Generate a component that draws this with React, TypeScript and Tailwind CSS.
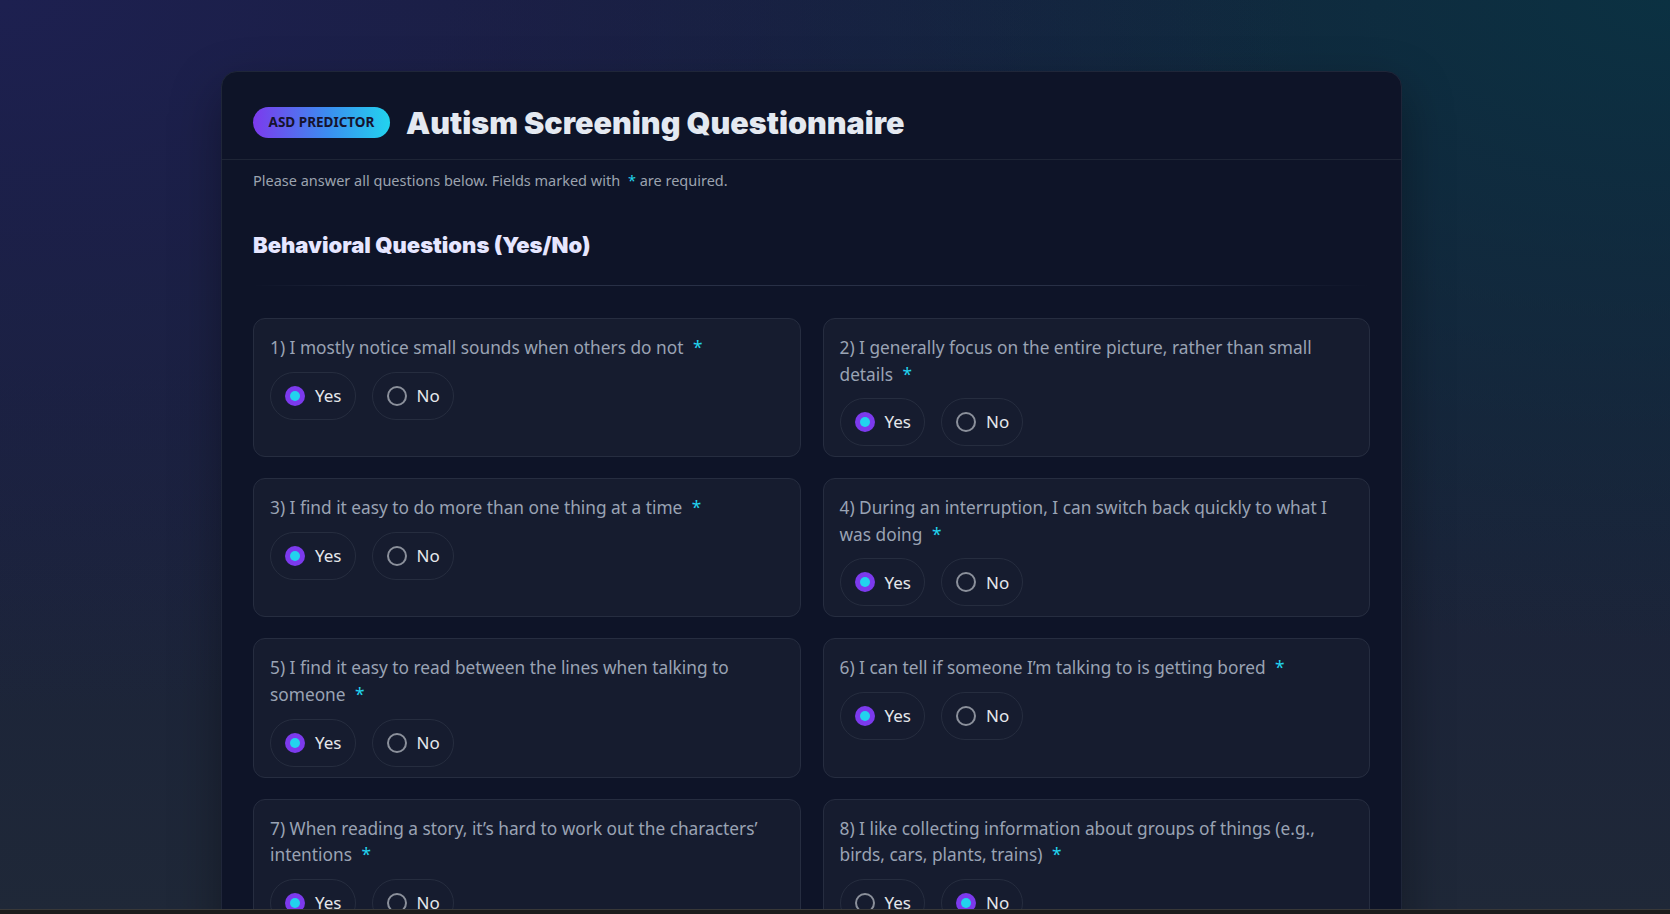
import React, { useState } from 'react';

const questions = [
  "I mostly notice small sounds when others do not",
  "I generally focus on the entire picture, rather than small details",
  "I find it easy to do more than one thing at a time",
  "During an interruption, I can switch back quickly to what I was doing",
  "I find it easy to read between the lines when talking to someone",
  "I can tell if someone I’m talking to is getting bored",
  "When reading a story, it’s hard to work out the characters’ intentions",
  "I like collecting information about groups of things (e.g., birds, cars, plants, trains)",
  "I find it easy to work out what someone is thinking or feeling just by looking at their face",
  "I find it difficult to work out people’s intentions",
];

const initial = ["Yes", "Yes", "Yes", "Yes", "Yes", "Yes", "Yes", "No", "Yes", "No"];

function Radio({ label, checked, onSelect }: { label: string; checked: boolean; onSelect: () => void }) {
  return (
    <button
      type="button"
      onClick={onSelect}
      className="inline-flex items-center h-[48px] pl-[14px] pr-[13px] gap-[10px] rounded-full border border-[#262d3f] text-[17px] text-[#e5e7eb]"
    >
      {checked ? (
        <span className="w-[20px] h-[20px] rounded-full bg-[#7c3aed] flex items-center justify-center">
          <span className="w-[10px] h-[10px] rounded-full bg-[#22d3ee]" />
        </span>
      ) : (
        <span className="w-[20px] h-[20px] rounded-full border-2 border-[#8b909b]" />
      )}
      {label}
    </button>
  );
}

export default function App() {
  const [answers, setAnswers] = useState<string[]>(initial);

  const pick = (i: number, v: string) =>
    setAnswers(prev => prev.map((a, j) => (j === i ? v : a)));

  return (
    <div
      className="h-screen overflow-hidden bg-[radial-gradient(ellipse_at_0%_0%,#1d2050_0%,transparent_55%),radial-gradient(ellipse_at_100%_0%,#0b3142_0%,transparent_50%),linear-gradient(180deg,#171d36_0%,#1b2339_60%,#1f2838_100%)] pl-[221px] pt-[71px] font-['Noto_Sans',sans-serif]"
    >
      <div className="w-[1181px] rounded-[16px] border border-[#1f2639] bg-[#0e1428] shadow-[0_20px_50px_rgba(0,0,0,0.35)] pb-[40px]">

        {/* Header */}
        <div className="flex items-center gap-[16px] px-[31px] pt-[35px] pb-[21px] border-b border-[#1e2536]">
          <span className="h-[31px] w-[137px] rounded-full bg-[linear-gradient(90deg,#7c3aed,#3b8ef0_55%,#22d3ee)] flex items-center justify-center text-[13.5px] font-bold text-[#16132e]">
            ASD PREDICTOR
          </span>
          <h1 className="font-['Inter',sans-serif] text-[30.5px] leading-[31px] font-black text-[#e4e9f1]">
            Autism Screening Questionnaire
          </h1>
        </div>

        <p className="px-[31px] pt-[10px] text-[14.5px] leading-[21px] text-[#9ca3af]">
          Please answer all questions below. Fields marked with <span className="ml-[4px] text-[#22d3ee]">*</span> are required.
        </p>

        <h2 className="px-[31px] mt-[40px] font-['Inter',sans-serif] text-[22px] leading-[29px] font-black text-[#e6e6ff]">
          Behavioral Questions (Yes/No)
        </h2>

        <div className="mx-[31px] mt-[25px] h-px bg-[linear-gradient(90deg,transparent,#283046_15%,#283046_80%,transparent)]" />

        {/* Questions */}
        <div className="mx-[31px] mt-[32px] grid grid-cols-2 gap-x-[22px] gap-y-[21px]">
          {questions.map((q, i) => (
            <div
              key={i}
              className="rounded-[12px] border border-[#262d40] bg-[#161c2f] px-[16px] pt-[16px] pb-[10px]"
            >
              <div className="text-[17.3px] leading-[26.6px] text-[#9aa3b4]">
                {i + 1}) {q} <span className="ml-[5px] text-[#22d3ee]">*</span>
              </div>
              <div className="mt-[10px] flex gap-[16px]">
                <Radio label="Yes" checked={answers[i] === "Yes"} onSelect={() => pick(i, "Yes")} />
                <Radio label="No" checked={answers[i] === "No"} onSelect={() => pick(i, "No")} />
              </div>
            </div>
          ))}
        </div>
      </div>

      <div className="fixed left-0 right-0 bottom-0 h-[5px] bg-[#1c1c1c] border-t border-[#383838]" />
    </div>
  );
}
